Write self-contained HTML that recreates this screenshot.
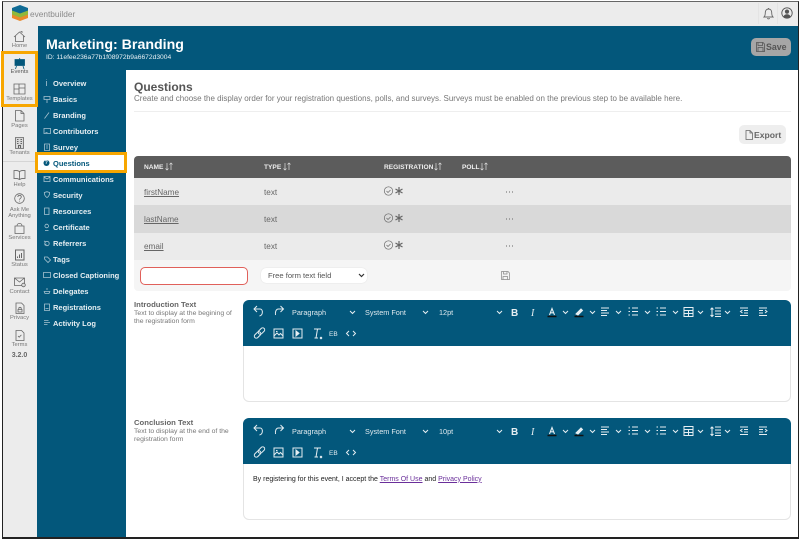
<!DOCTYPE html>
<html><head><meta charset="utf-8"><style>
html,body{margin:0;padding:0}
body{width:800px;height:538px;position:relative;overflow:hidden;background:#fff;font-family:"Liberation Sans",sans-serif}
.a{position:absolute;white-space:nowrap}
.s{position:absolute;left:2px;width:35px;text-align:center;color:#777;font-size:5.800px;line-height:6px}
.n{position:absolute;left:53px;color:#e6eef2;font-size:7.500px;font-weight:bold;line-height:10px;white-space:nowrap}
.th{position:absolute;top:163.500px;color:#eee;font-size:6.600px;font-weight:bold;line-height:8px}
.c{position:absolute;color:#666;font-size:8.200px;line-height:10px}
.l{text-decoration:underline}
svg{position:absolute;overflow:visible}
.tt{font:7.300px "Liberation Sans",sans-serif;fill:#dfe9ee}
</style></head><body>
<div class="a" style="left:2px;top:2px;width:36px;height:535px;background:#ececec"></div>
<div class="a" style="left:2px;top:2px;width:796px;height:24px;background:#ececec"></div>
<div class="a" style="left:38px;top:26px;width:760px;height:44px;background:#03577b"></div>
<div class="a" style="left:37px;top:69px;width:88.500px;height:468px;background:#03577b"></div>

<!-- logo -->
<svg style="left:0;top:0" width="60" height="26" viewBox="0 0 60 26">
<path d="M12 14l8-3 8 3v4l-8 3-8-3z" fill="#e98a2b"/>
<path d="M12 10.500l8-3 8 3v4l-8 3-8-3z" fill="#8fb83a"/>
<path d="M12 8l8-3 8 3v2.500l-8 3-8-3z" fill="#0e6a94"/>
</svg>
<div class="a" style="left:30px;top:9px;font-size:8.300px;line-height:10px;color:#8a8a8a">eventbuilder</div>
<!-- top right -->
<div class="a" style="left:758px;top:3px;width:1px;height:21px;background:#e4e4e4"></div>
<div class="a" style="left:777px;top:3px;width:1px;height:21px;background:#e4e4e4"></div>
<svg style="left:763px;top:7px" width="11" height="13" viewBox="0 0 11 13" fill="none" stroke="#666" stroke-width=".9"><path d="M1 10h9c-1-1-1.300-2-1.300-4.500C8.700 3.300 7.300 2 5.500 2S2.300 3.300 2.300 5.500C2.300 8 2 9 1 10zM4.300 11.300c.5.8 1.900.8 2.400 0M5.500 1v1"/></svg>
<svg style="left:781px;top:7px" width="12" height="12" viewBox="0 0 12 12"><circle cx="6" cy="6" r="5.200" fill="none" stroke="#555" stroke-width=".9"/><circle cx="6" cy="4.600" r="2.100" fill="#555"/><path d="M2.500 9.500c.8-1.800 2-2.300 3.500-2.300s2.700.5 3.500 2.300c-1 1-2.200 1.500-3.500 1.500s-2.500-.5-3.500-1.500z" fill="#555"/></svg>

<!-- header -->
<div class="a" style="left:46px;top:37px;font-size:14.200px;line-height:17px;font-weight:bold;color:#fff">Marketing: Branding</div>
<div class="a" style="left:46px;top:54px;font-size:6.700px;line-height:8px;color:#e8f0f4">ID: 11efee236a77b1f08972b9a6672d3004</div>
<div class="a" style="left:751px;top:38px;width:40px;height:18px;border-radius:5px;background:#a6a6a6"></div>
<svg style="left:756px;top:42px" width="9" height="10" viewBox="0 0 9 10" fill="none" stroke="#555" stroke-width=".8"><path d="M.5.500h6.500l1.500 1.500v7.500h-8zM2 .5v3h4.500v-3M2 9.500v-4h5v4"/></svg>
<div class="a" style="left:766px;top:41.500px;font-size:8.800px;line-height:11px;font-weight:bold;color:#555">Save</div>

<!-- sidebar -->
<svg style="left:0;top:0" width="38" height="360" viewBox="0 0 38 360" fill="none" stroke="#666" stroke-width=".8">
<path d="M14 37l5.500-5 5.500 5M15.500 36v5.500h8V36M20.500 31.500h1.500v1.500"/>
<path d="M15 59.500h9.500v6H15z" fill="#03577b" stroke="#03577b"/><path d="M16.500 66l-1 3M23 66l1 3M19.700 58v2" stroke="#03577b"/>
<g transform="translate(0 -1)">
<path d="M14 85h11v10H14zM14 90h5M19 85v10M19 89h6"/>
<path d="M15.500 111.500h5.500l3 3v7.500h-8.500zM21 111.500v3h3"/>
<path d="M15.500 138.500h8v11h-8z" fill="#d8d8d8"/><path d="M17 140.500h1.500M20.500 140.500H22M17 142.500h1.500M20.500 142.500H22M17 144.500h1.500M20.500 144.500H22M18.500 149v-2.500h2v2.500" stroke-width="1"/>
<path d="M19.500 172.500c-1.500-1-3.500-1.200-5.500-1v8c2-.2 4-.1 5.500 1 1.500-1.100 3.500-1.200 5.500-1v-8c-2-.2-4 0-5.500 1zM19.500 172.500v8"/>
</g>
<circle cx="19.500" cy="198.500" r="4.800"/><path d="M17.800 197c.2-2.300 3.500-2 3.500 0 0 1.300-1.800 1.300-1.800 2.800M19.500 200.700v.8"/>
<path d="M15 226h9v7.500h-9zM17 226c0-3.500 5-3.500 5 0"/>
<path d="M15.500 250h8.500v10h-8.500z" stroke-width="1"/><path d="M17.500 258v-1.500M19.500 258v-3.500M21.500 258v-5" stroke-width="1"/>
<path d="M14.500 278h10v7.500h-10zM14.500 278l5 4 5-4"/><circle cx="23.500" cy="285" r="1.800" fill="#ddd"/>
<g transform="translate(0 -.5)"><path d="M16 303.500h5.500l2.500 2.500v8h-8z"/><path d="M18 310h4v2.500h-4zM18.800 310v-1.200c0-1.300 2.400-1.300 2.400 0v1.200"/></g>
<path d="M16 330.500h5.500l2.500 2.500v7.500h-8zM18 336l1.200 1.200 2.200-2.300"/>
</svg>
<div class="a" style="left:2px;top:161px;width:35px;height:1px;background:#d5d5d5"></div>
<div class="s" style="top:43px">Home</div>
<div class="s" style="top:69px;color:#555">Events</div>
<div class="s" style="top:96px">Templates</div>
<div class="s" style="top:123px">Pages</div>
<div class="s" style="top:150px">Tenants</div>
<div class="s" style="top:182px">Help</div>
<div class="s" style="top:207px">Ask Me<br>Anything</div>
<div class="s" style="top:235px">Services</div>
<div class="s" style="top:262px">Status</div>
<div class="s" style="top:289px">Contact</div>
<div class="s" style="top:315px">Privacy</div>
<div class="s" style="top:342px">Terms</div>
<div class="s" style="top:353px;font-size:7px;font-weight:bold;color:#666">3.2.0</div>

<!-- nav -->
<div class="a" style="left:38px;top:155px;width:88px;height:16px;background:#fff"></div>
<svg style="left:0;top:0" width="130" height="340" viewBox="0 0 130 340" fill="none" stroke="#a9c4d1" stroke-width=".8">
<path d="M46.500 81v5M46.500 79.500v.5"/>
<path d="M44 96.500h6v3h-6zM47 99.500v3.500"/>
<path d="M44.500 118.500l4.500-6"/>
<path d="M44 128.500h6.500v5H44zM45.500 132.500h2"/>
<path d="M44.500 144h5v6.500h-5zM46 146h2M46 148h2"/>
<circle cx="46.500" cy="163" r="3" fill="#03577b" stroke="none"/>
<path d="M44 176.500h6v5h-6zM44 177l3 2 3-2"/>
<path d="M44.300 192.500l2.700-.8 2.600.8c0 2.500-.8 4-2.600 5-1.800-1-2.700-2.500-2.700-5z"/>
<path d="M44.500 208h4.500v6.500h-4.500z"/>
<circle cx="46.700" cy="226" r="1.800"/><path d="M45 230.500h3.500"/>
<circle cx="47" cy="243.500" r="2.200"/><path d="M44 241l2 1M44.500 245l2-1"/>
<path d="M44.500 257l3 0 3 3-2.500 2.500-3.500-3.500z"/>
<path d="M43.500 272.500h7v5h-7z"/>
<path d="M45 293.500h4l.8-2h-5.600zM46 289h2"/>
<path d="M44.500 304h5v6.500h-5zM45.500 308.500h3"/>
<path d="M44 320.500h4.500M44 322.500h6M44 324.500h3.500"/>
</svg>
<div class="a" style="left:44.700px;top:160.200px;font-size:5px;line-height:6px;font-weight:bold;color:#fff">?</div>
<div class="n" style="top:78px;margin-top:0.500px">Overview</div>
<div class="n" style="top:94.500px">Basics</div>
<div class="n" style="top:110.500px">Branding</div>
<div class="n" style="top:126.500px">Contributors</div>
<div class="n" style="top:142.500px">Survey</div>
<div class="n" style="top:158.500px;color:#03577b">Questions</div>
<div class="n" style="top:174.500px">Communications</div>
<div class="n" style="top:190.500px">Security</div>
<div class="n" style="top:206.500px">Resources</div>
<div class="n" style="top:222.500px">Certificate</div>
<div class="n" style="top:238.500px">Referrers</div>
<div class="n" style="top:254.500px">Tags</div>
<div class="n" style="top:270.500px">Closed Captioning</div>
<div class="n" style="top:286.500px">Delegates</div>
<div class="n" style="top:302.500px">Registrations</div>
<div class="n" style="top:318.500px">Activity Log</div>

<!-- content head -->
<div class="a" style="left:134px;top:79.500px;font-size:12px;line-height:14px;font-weight:bold;color:#555">Questions</div>
<div class="a" style="left:134px;top:94px;font-size:8px;line-height:10px;color:#777">Create and choose the display order for your registration questions, polls, and surveys. Surveys must be enabled on the previous step to be available here.</div>
<div class="a" style="left:134px;top:111px;width:657px;height:1px;background:#eee"></div>
<div class="a" style="left:739px;top:125px;width:47px;height:19px;border-radius:5px;background:#eee"></div>
<svg style="left:745px;top:130px" width="8" height="10" viewBox="0 0 8 10" fill="none" stroke="#666" stroke-width=".8"><path d="M1 .500h4l2.500 2.500v6.500H1zM5 .5v2.500h2.500"/></svg>
<div class="a" style="left:754px;top:129.500px;font-size:8.600px;line-height:11px;font-weight:bold;color:#666">Export</div>

<!-- table -->
<div class="a" style="left:134px;top:156px;width:657px;height:22px;background:#5c5c5c;border-radius:4px 4px 0 0"></div>
<div class="a" style="left:134px;top:178px;width:657px;height:27px;background:#ebebeb"></div>
<div class="a" style="left:134px;top:205px;width:657px;height:28px;background:#d9d9d9"></div>
<div class="a" style="left:134px;top:233px;width:657px;height:27px;background:#ebebeb"></div>
<div class="a" style="left:134px;top:260px;width:657px;height:31px;background:#f5f5f5;border-radius:0 0 4px 4px"></div>
<div class="th" style="left:144px">NAME</div><div class="th" style="left:264px">TYPE</div><div class="th" style="left:384px">REGISTRATION</div><div class="th" style="left:462px">POLL</div>
<svg style="left:0;top:0" width="540" height="300" viewBox="0 0 540 300" fill="none" stroke="#ddd" stroke-width=".7">
<path d="M167 163v7M165.500 168.500l1.500 1.500 1.500-1.500M171 170v-7M169.500 164.500l1.500-1.500 1.500 1.500"/>
<path d="M285 163v7M283.500 168.500l1.500 1.500 1.500-1.500M289 170v-7M287.500 164.500l1.500-1.500 1.500 1.500"/>
<path d="M436 163v7M434.500 168.500l1.500 1.500 1.500-1.500M440 170v-7M438.500 164.500l1.500-1.500 1.500 1.500"/>
<path d="M482 163v7M480.500 168.500l1.500 1.500 1.500-1.500M486 170v-7M484.500 164.500l1.500-1.500 1.500 1.500"/>
<g stroke="#666"><circle cx="388.500" cy="191" r="4.200"/><path d="M386.500 191l1.500 1.500 2.500-2.500"/><path d="M399 187v8M395.500 189l7 4M402.500 189l-7 4" stroke-width="1.200"/>
<circle cx="388.500" cy="218" r="4.200"/><path d="M386.500 218l1.500 1.500 2.500-2.500"/><path d="M399 214v8M395.500 216l7 4M402.500 216l-7 4" stroke-width="1.200"/>
<circle cx="388.500" cy="245" r="4.200"/><path d="M386.500 245l1.500 1.500 2.500-2.500"/><path d="M399 241v8M395.500 243l7 4M402.500 243l-7 4" stroke-width="1.200"/>
<path d="M506 192h1M509 192h1M512 192h1M506 219h1M509 219h1M512 219h1M506 246h1M509 246h1M512 246h1" stroke-width="1.100"/>
<path d="M501.500 271.500h6.500l1.500 1.500v6.500h-8zM503.500 271.500v2.500h3.500v-2.500M503 279.500v-3h4.500v3" stroke="#888"/></g>
</svg>
<div class="c l" style="left:144px;top:188px">firstName</div><div class="c" style="left:264px;top:188px">text</div>
<div class="c l" style="left:144px;top:215px">lastName</div><div class="c" style="left:264px;top:215px">text</div>
<div class="c l" style="left:144px;top:242px">email</div><div class="c" style="left:264px;top:242px">text</div>
<div class="a" style="left:140px;top:267px;width:106px;height:16px;background:#fff;border:1px solid #e0605a;border-radius:5px"></div>
<div class="a" style="left:261px;top:268px;width:106px;height:15px;background:#fff;border-radius:5px;box-shadow:0 0 1px #ccc"></div>
<div class="c" style="left:268px;top:271px;color:#555;font-size:7.600px">Free form text field</div>
<svg style="left:358px;top:273px" width="7" height="5" viewBox="0 0 7 5" fill="none" stroke="#333" stroke-width="1.200"><path d="M1 1l2.500 2.500L6 1"/></svg>

<!-- labels -->
<div class="a" style="left:134px;top:299.500px;font-size:7.700px;line-height:10px;font-weight:bold;color:#666">Introduction Text</div>
<div class="a" style="left:134px;top:310px;font-size:6.850px;line-height:8px;color:#777">Text to display at the begining of<br>the registration form</div>
<div class="a" style="left:134px;top:417.500px;font-size:7.700px;line-height:10px;font-weight:bold;color:#666">Conclusion Text</div>
<div class="a" style="left:134px;top:428px;font-size:6.850px;line-height:8px;color:#777">Text to display at the end of the<br>registration form</div>

<!-- editors -->
<div class="a" style="left:243px;top:300px;width:546px;height:100px;border:1px solid #e4e4e4;border-radius:6px"></div>
<div class="a" style="left:243px;top:300px;width:548px;height:46px;background:#03577b;border-radius:6px 6px 0 0"></div>
<div class="a" style="left:243px;top:418px;width:546px;height:100px;border:1px solid #e4e4e4;border-radius:6px"></div>
<div class="a" style="left:243px;top:418px;width:548px;height:46px;background:#03577b;border-radius:6px 6px 0 0"></div>

<svg width="0" height="0" style="left:0;top:0"><defs><g id="tb" fill="none" stroke="#e6eef2" stroke-width="1">
<path d="M14 12l-3-3 3-3M11 9h6c3 0 3.500 6-.5 7"/>
<path d="M37.500 12l3-3-3-3M40.500 9h-5c-2.500 0-3.500 3-3 6"/>
<path d="M107 11l2.500 2.500 2.500-2.500M180 11l2.500 2.500 2.500-2.500M254 11l2.500 2.500 2.500-2.500M320 11l2.500 2.500 2.500-2.500M347 11l2.500 2.500 2.500-2.500M373 11l2.500 2.500 2.500-2.500M402 11l2.500 2.500 2.500-2.500M430 11l2.500 2.500 2.500-2.500M455 11l2.500 2.500 2.500-2.500M482 11l2.500 2.500 2.500-2.500"/>
<path d="M304.500 16.500h9" stroke="#111" stroke-width="1.500"/><path d="M306.500 15l2.500-6.500 2.500 6.500M307.500 12.800h3" stroke-width="1.100"/>
<path d="M331.500 16.500h9" stroke="#111" stroke-width="1.500"/><path d="M333 14l5-5 1.500 1.500-4.500 4.500z" fill="#e6eef2"/>
<path d="M358 8h8M358 10.500h6M358 13h8M358 15.500h6"/>
<path d="M389 8h6M389 11.500h6M389 15h6M385.500 8h1.500M385.500 11.500h1.500M385.500 15h1.500"/>
<path d="M417 8h6M417 11.500h6M417 15h6M413.500 8h1.500M413.500 11.500h1.500M413.500 15h1.500"/>
<path d="M441 7.500h9v9h-9zM441 10.500h9M445.500 10.500v6M441 13.500h9"/>
<path d="M472 8h6M472 11h6M472 14h6M472 16.500h6M469 8v8.500M467.500 9.500L469 8l1.500 1.500M467.500 15L469 16.500l1.500-1.500" />
<path d="M497 8h8M501 10.500h4M501 13h4M497 15.500h8M499.500 10l-2 1.500 2 1.500"/>
<path d="M516 8h8M516 10.500h4M516 13h4M516 15.500h8M522 10l2 1.500-2 1.500"/>
<g transform="rotate(-45 16.500 33)"><rect x="10" y="31" width="7.500" height="4" rx="2"/><rect x="15.500" y="31" width="7.500" height="4" rx="2"/></g>
<path d="M31 29h9v9h-9zM31 36l3-3 2 2 1.500-1.500 2.500 2.500M33 31.500h1.500"/>
<path d="M50 29h9v9h-9z"/><path d="M53 31l3 2.500-3 2.500z" fill="#e6eef2"/>
<path d="M71 29h7M74.500 29l-1.500 9M71.500 38h3.500M77 37l2 2M79 37l-2 2"/>
<path d="M106 31l-2.500 2.500L106 36M110 31l2.500 2.500L110 36"/>
</g></defs></svg>

<svg style="left:243px;top:300px" width="548" height="46" viewBox="0 0 548 46"><use href="#tb"/>
<text x="49" y="15" class="tt">Paragraph</text><text x="122" y="15" class="tt">System Font</text><text x="196" y="15" class="tt">12pt</text>
<text x="268" y="16" style="font:bold 10px 'Liberation Sans',sans-serif;fill:#e6eef2">B</text>
<text x="288" y="16" style="font:italic 10px 'Liberation Serif',serif;fill:#e6eef2">I</text>
<text x="86" y="36" style="font:6.500px 'Liberation Sans',sans-serif;fill:#e6eef2">EB</text></svg>
<svg style="left:243px;top:419px" width="548" height="46" viewBox="0 0 548 46"><use href="#tb"/>
<text x="49" y="15" class="tt">Paragraph</text><text x="122" y="15" class="tt">System Font</text><text x="196" y="15" class="tt">10pt</text>
<text x="268" y="16" style="font:bold 10px 'Liberation Sans',sans-serif;fill:#e6eef2">B</text>
<text x="288" y="16" style="font:italic 10px 'Liberation Serif',serif;fill:#e6eef2">I</text>
<text x="86" y="36" style="font:6.500px 'Liberation Sans',sans-serif;fill:#e6eef2">EB</text></svg>
<div class="a" style="left:253px;top:474.500px;font-size:7px;line-height:10px;color:#222">By registering for this event, I accept the <span style="color:#6a2f9a;text-decoration:underline">Terms Of Use</span> and <span style="color:#6a2f9a;text-decoration:underline">Privacy Policy</span></div>

<!-- frame -->
<div class="a" style="left:2px;top:1px;width:795px;height:535px;border:solid #222;border-width:1px 1px 2px 1px;border-top-color:#666"></div>
<!-- orange highlights -->
<div class="a" style="left:1px;top:50.500px;width:31px;height:50px;border:3px solid #f7a600"></div>
<div class="a" style="left:35px;top:152px;width:86px;height:15px;border:3px solid #f7a600"></div>
</body></html>
